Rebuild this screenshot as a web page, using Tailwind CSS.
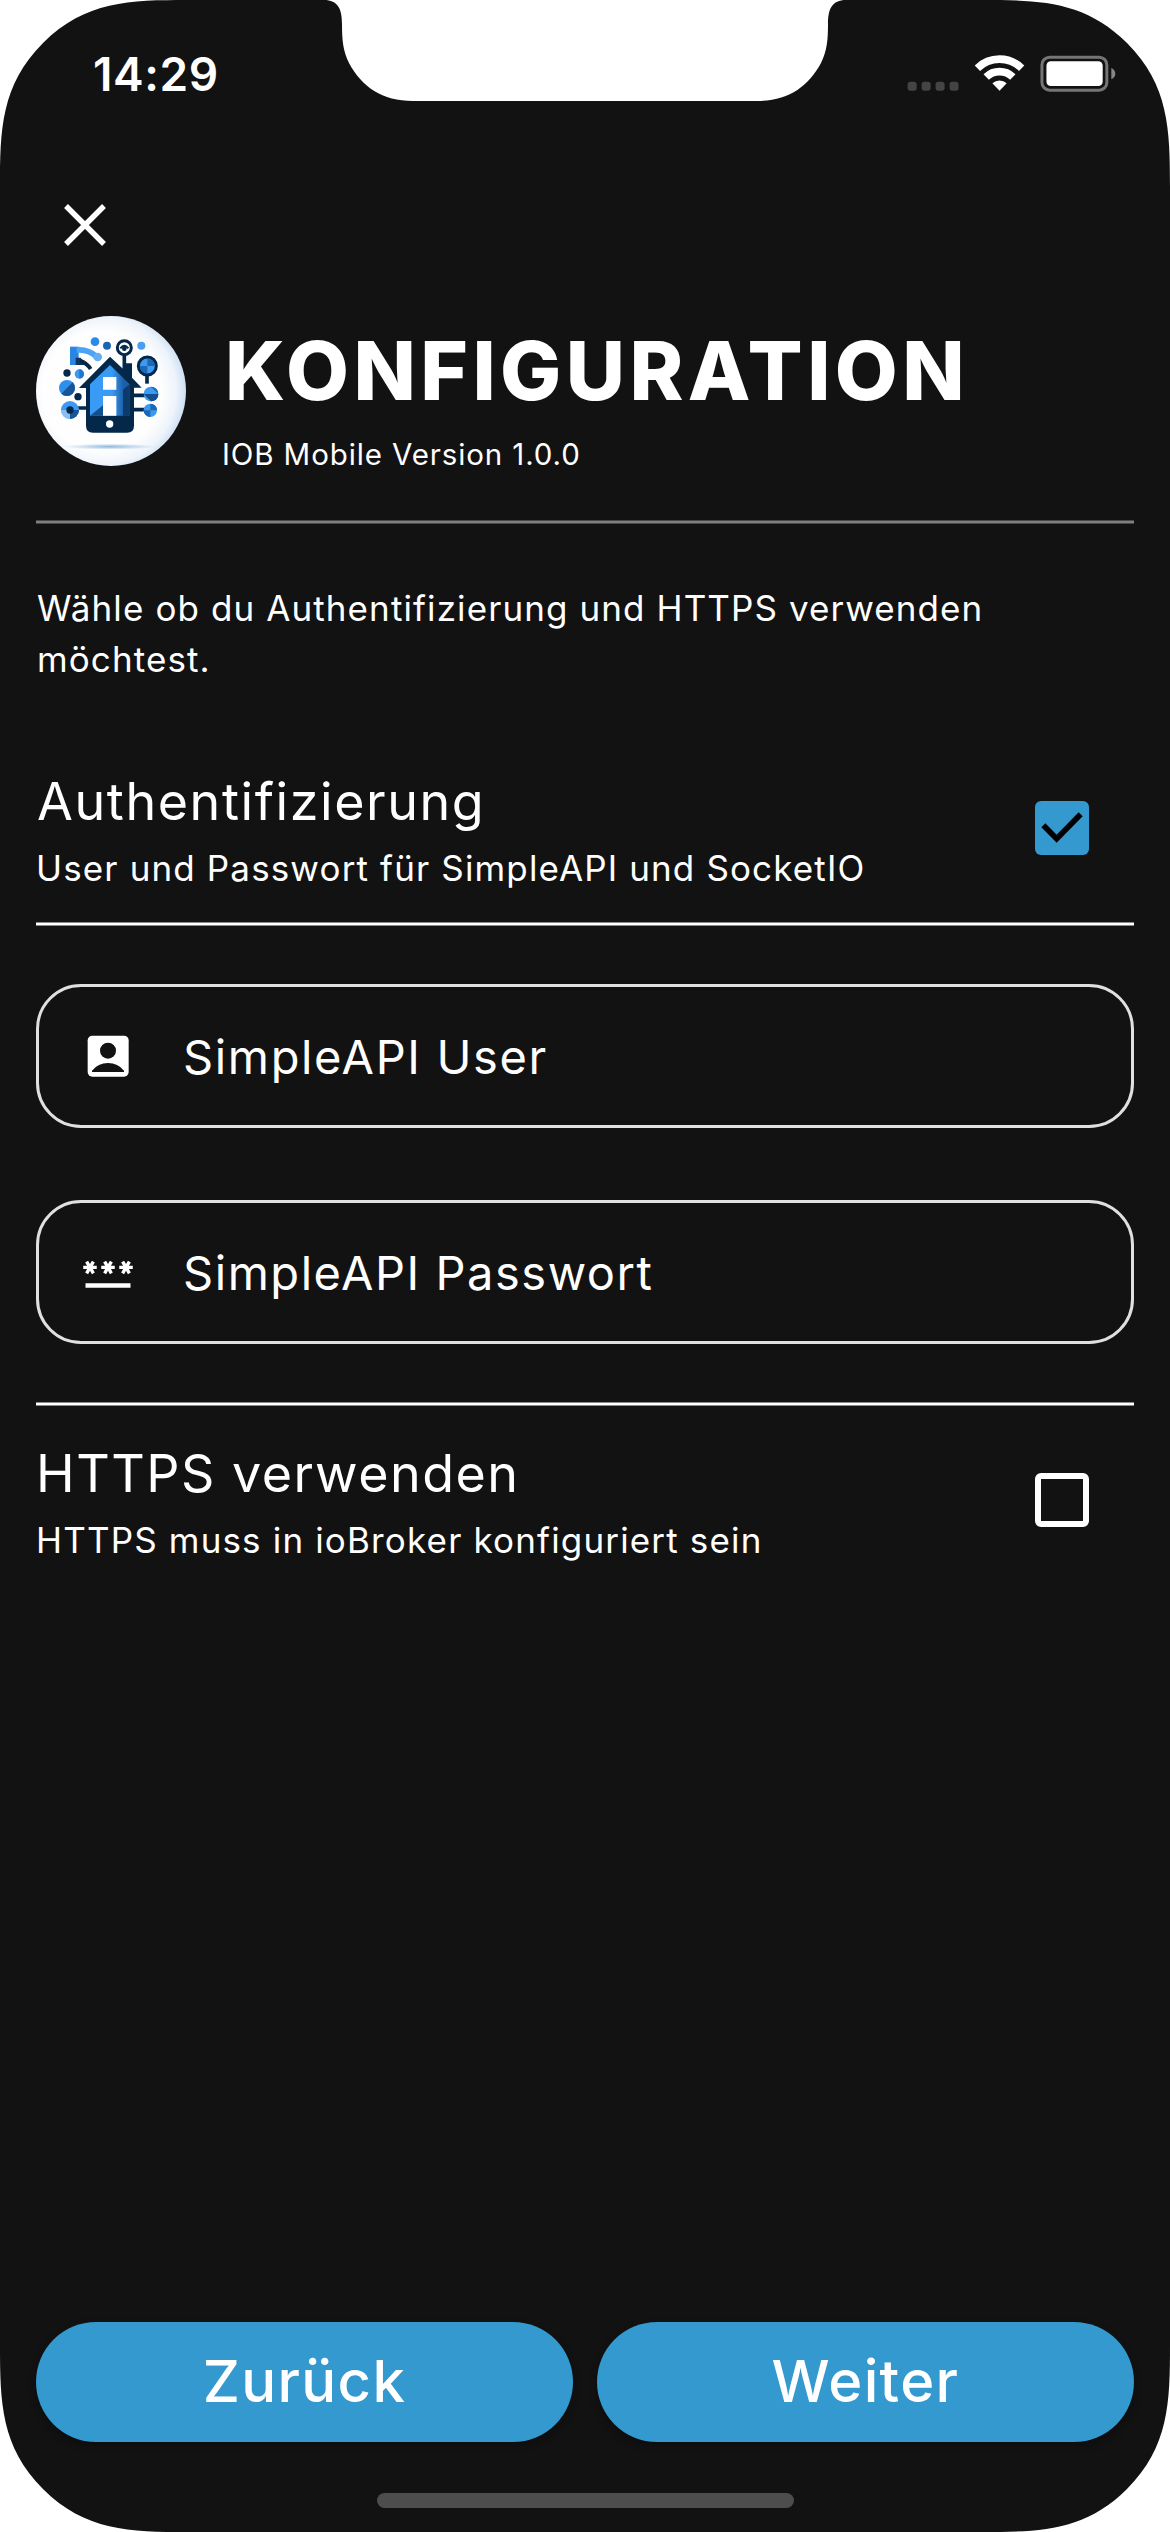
<!DOCTYPE html>
<html lang="de">
<head>
<meta charset="utf-8">
<title>Konfiguration</title>
<script src="https://cdn.jsdelivr.net/npm/@tailwindcss/browser@4"></script>
</head>
<body class="bg-white">
<main class="relative flex h-[2532px] w-[1170px] flex-col overflow-hidden bg-[#121212] px-9 font-['Inter',sans-serif] text-white">

  <!-- Status bar -->
  <header class="flex h-[150px] shrink-0 items-start justify-between pt-[51px]">
    <div class="ml-[57px] text-[46px] leading-[46px] font-semibold tracking-[0.6px] whitespace-nowrap">14:29</div>
    <svg class="mt-[2px] mr-[17px] h-[40px] w-[213px]" viewBox="130 160 640 120">
      <g fill="#444444">
        <rect x="141" y="246" width="27" height="27" rx="8"/>
        <rect x="183" y="246" width="27" height="27" rx="8"/>
        <rect x="225" y="246" width="27" height="27" rx="8"/>
        <rect x="267" y="246" width="27" height="27" rx="8"/>
      </g>
      <g fill="none" stroke="#fff" stroke-width="23">
        <path d="M350.5 205.5A95 95 0 0 1 483.5 205.5"/>
        <path d="M377 232A57.5 57.5 0 0 1 457 232"/>
      </g>
      <path d="M417 273L395.500 250.500A32 32 0 0 1 438.500 250.500Z" fill="#fff"/>
      <rect x="544.500" y="172.500" width="195" height="99" rx="23" fill="none" stroke="#757575" stroke-width="9"/>
      <rect x="558" y="185" width="169" height="74" rx="13" fill="#fff"/>
      <path d="M753 205Q765 211 765 222T753 239Z" fill="#858585"/>
    </svg>
  </header>

  <button class="mt-[54px] ml-7 h-[42px] w-[42px] shrink-0" aria-label="Schließen">
    <svg class="h-full w-full" viewBox="0 0 42 42" fill="none" stroke="#fff" stroke-width="5.400"><path d="M2 2L40 40M40 2L2 40"/></svg>
  </button>

  <!-- App title -->
  <section class="mt-[70px] flex h-[150px] shrink-0">
    <svg class="h-[150px] w-[150px] shrink-0" viewBox="48 49 450 450">
      <defs>
        <radialGradient id="disc" cx="0.44" cy="0.5" r="0.58"><stop offset="0.68" stop-color="#fefefe"/><stop offset="0.85" stop-color="#eef4fb"/><stop offset="1" stop-color="#c3daf2"/></radialGradient>
        <radialGradient id="shade"><stop offset="0" stop-color="#8fb8de"/><stop offset="1" stop-color="#8fb8de" stop-opacity="0"/></radialGradient>
        <linearGradient id="wall" x1="0" x2="1"><stop offset="0" stop-color="#3a9bf5"/><stop offset="0.550" stop-color="#3a9bf5"/><stop offset="0.850" stop-color="#1b5fa8"/></linearGradient>
      </defs>
      <circle cx="273" cy="274" r="225" fill="url(#disc)"/>
      <ellipse cx="270" cy="441" rx="138" ry="9" fill="url(#shade)"/>
      <path d="M150 141H176V196H150Z" fill="#2a86e0"/>
      <path d="M170 151Q205 148 230 171" fill="none" stroke="#4aa3f5" stroke-width="17"/>
      <path d="M167 174H182L196 196H167Z" fill="#12355f"/>
      <path d="M180 183Q200 190 212 208" fill="none" stroke="#0a2647" stroke-width="12"/>
      <circle cx="233" cy="172" r="13" fill="#62adf3"/>
      <circle cx="225" cy="126" r="13" fill="#2a8ae8"/>
      <circle cx="261" cy="138" r="12" fill="#1b66b4"/>
      <circle cx="364" cy="138" r="12" fill="#4a9ff0"/>
      <g stroke="#03284a" fill="none">
        <path d="M313 168V215" stroke-width="11"/>
        <circle cx="313" cy="144" r="21" stroke-width="9" fill="#fff"/>
        <path d="M301 146Q313 130 325 146" stroke-width="6"/>
        <path d="M381 222V252" stroke-width="11"/>
        <path d="M168 325H205M335 287H380M335 330H380" stroke-width="11"/>
      </g>
      <circle cx="313" cy="147" r="7" fill="#03284a"/>
      <circle cx="382" cy="199" r="27" fill="#3c9af2" stroke="#03284a" stroke-width="9"/>
      <path d="M382 177A22 22 0 0 1 404 199H382ZM382 199V221A22 22 0 0 1 360 199Z" fill="#1d68b5"/>
      <circle cx="141" cy="220" r="11" fill="#03284a"/>
      <circle cx="178" cy="223" r="14" fill="#3c9af2"/><path d="M178 209A14 14 0 0 1 178 237Z" fill="#1d78cf"/>
      <circle cx="141" cy="265" r="24" fill="#2f8fea"/><path d="M141 265L158 248A24 24 0 0 1 124 282Z" fill="#175596"/>
      <circle cx="174" cy="291" r="11" fill="#03284a"/>
      <circle cx="150" cy="331" r="27" fill="#3c9af2"/><path d="M150 331H177A27 27 0 0 1 150 358Z" fill="#175596"/>
      <path d="M150 331V358A27 27 0 0 1 123 331Z" fill="#8cbdec"/>
      <circle cx="150" cy="331" r="11" fill="#03284a"/>
      <circle cx="393" cy="283" r="22" fill="#3c9af2"/><path d="M393 261A22 22 0 0 1 393 305V283H415Z" fill="#1d68b5"/><path d="M371 283H415A22 22 0 0 1 393 305Z" fill="#174f8c"/>
      <circle cx="391" cy="332" r="20" fill="#3c9af2"/><path d="M391 312A20 20 0 0 1 411 332H391ZM391 332V352A20 20 0 0 1 371 332Z" fill="#1d68b5"/>
      <path d="M270 171L315 213V191H336V234L365 264H342V378Q342 399 321 399H219Q198 399 198 378V265H177Z" fill="#03284a"/>
      <path d="M270 196L329 254V348H210V254Z" fill="url(#wall)"/>
      <path d="M329 254L309 270V348H329Z" fill="#0c3a6b"/>
      <path d="M210 348L249 317V348Z" fill="#12518f"/>
      <path d="M249 232H289V270H249ZM249 289H289V348H249Z" fill="#fff"/>
      <circle cx="269" cy="373" r="11" fill="#fff"/>
    </svg>
    <div class="ml-[37px]">
      <h1 class="pt-[6px] pl-[2px] text-[81.500px] leading-[98px] font-extrabold tracking-[4.4px] whitespace-nowrap">KONFIGURATION</h1>
      <p class="mt-[14px] -ml-px text-[29.500px] leading-[40px] tracking-[0.88px] whitespace-nowrap">IOB Mobile Version 1.0.0</p>
    </div>
  </section>
  <hr class="mt-[54px] h-1 shrink-0 border-y border-[#494949] bg-[#808080]">

  <p class="mt-[59px] shrink-0 pl-px text-[35px] leading-[51px] tracking-[1.1px]">Wähle ob du Authentifizierung und HTTPS verwenden<br>möchtest.</p>

  <!-- Authentication -->
  <section class="mt-[85px] flex h-[122px] shrink-0 items-start justify-between pr-[45px]">
    <div>
      <h2 class="pl-px text-[52px] leading-[64px] tracking-[1.58px] whitespace-nowrap">Authentifizierung</h2>
      <p class="mt-[10px] text-[35px] leading-[48px] tracking-[1.14px] whitespace-nowrap">User und Passwort für SimpleAPI und SocketIO</p>
    </div>
    <div class="mt-[31px] h-[54px] w-[54px] rounded-[6px] bg-[#3399cf]">
      <svg class="h-full w-full" viewBox="165 123 162 162" fill="none" stroke="#000" stroke-width="17"><path d="M190 195.500L230 236L302 163"/></svg>
    </div>
  </section>
  <hr class="mt-[30px] h-1 shrink-0 border-y border-[#898989] bg-white">

  <div class="mt-[58px] flex h-[144px] shrink-0 items-center rounded-[45px] border-[3px] border-[#e0e0e0] pl-[42px]">
    <svg class="h-[54px] w-[54px]" viewBox="33 26 162 162">
      <rect x="53" y="46" width="123" height="123" rx="14" fill="#fff"/>
      <circle cx="114" cy="91" r="24" fill="#121212"/>
      <path d="M66 155V151Q84 128 114 128T162 151V155Z" fill="#121212"/>
    </svg>
    <span class="ml-12 pt-[2px] text-[47px] leading-[60px] tracking-[1.65px] whitespace-nowrap">SimpleAPI User</span>
  </div>

  <div class="mt-[72px] flex h-[144px] shrink-0 items-center rounded-[45px] border-[3px] border-[#e0e0e0] pl-[42px]">
    <svg class="h-[54px] w-[54px]" viewBox="0 0 24 24" fill="#fff">
      <path d="M2 17h20v2H2z"/>
      <g id="star"><path d="M3.150 12.950L4 11.470l.85 1.480 1.300-.75-.85-1.480H7v-1.500H5.300l.85-1.470L4.850 7 4 8.470 3.150 7l-1.300.75.85 1.470H1v1.500h1.700l-.85 1.480z"/></g>
      <use href="#star" x="8"/>
      <use href="#star" x="16"/>
    </svg>
    <span class="ml-12 pt-[2px] text-[47px] leading-[60px] tracking-[1.55px] whitespace-nowrap">SimpleAPI Passwort</span>
  </div>
  <hr class="mt-[58px] h-1 shrink-0 border-y border-[#898989] bg-white">

  <!-- HTTPS -->
  <section class="mt-[36px] flex h-[122px] shrink-0 items-start justify-between pr-[45px]">
    <div>
      <h2 class="text-[52px] leading-[64px] tracking-[1.5px] whitespace-nowrap">HTTPS verwenden</h2>
      <p class="mt-[10px] text-[35px] leading-[48px] tracking-[1.16px] whitespace-nowrap">HTTPS muss in ioBroker konfiguriert sein</p>
    </div>
    <div class="mt-[31px] h-[54px] w-[54px] rounded-[6px] border-[6px] border-white"></div>
  </section>

  <!-- Navigation -->
  <footer class="mt-auto flex shrink-0 flex-col items-center pb-6">
    <div class="flex w-full gap-6">
      <button class="h-[120px] flex-1 rounded-full bg-[#3399cf] pb-[2px] text-[58px] leading-[60px] font-medium tracking-[1.4px] shadow-[0_4px_8px_rgba(0,0,0,0.3)]">Zurück</button>
      <button class="h-[120px] flex-1 rounded-full bg-[#3399cf] pb-[2px] text-[58px] leading-[60px] font-medium tracking-[1.36px] shadow-[0_4px_8px_rgba(0,0,0,0.3)]">Weiter</button>
    </div>
    <div class="mt-[51px] h-[15px] w-[417px] rounded-full bg-[#4d4d4d]"></div>
  </footer>

  <!-- Display corners and notch -->
  <svg class="pointer-events-none absolute top-0 left-0 h-[2532px] w-[1170px]" viewBox="0 0 1170 2532" fill="#fff">
    <g id="corner"><path d="M0 0H187C130 0 85 1 43 43C1 85 0 130 0 187Z"/></g>
    <use href="#corner" transform="translate(1170 0) scale(-1 1)"/>
    <use href="#corner" transform="translate(0 2532) scale(1 -1)"/>
    <use href="#corner" transform="translate(1170 2532) scale(-1 -1)"/>
    <path d="M324 0C338 0 342 9 342 24C342 40 343 51 349 63C362 87 382 101 413 101H757C788 101 808 87 821 63C827 51 828 40 828 24C828 9 832 0 846 0Z"/>
  </svg>
</main>
</body>
</html>
